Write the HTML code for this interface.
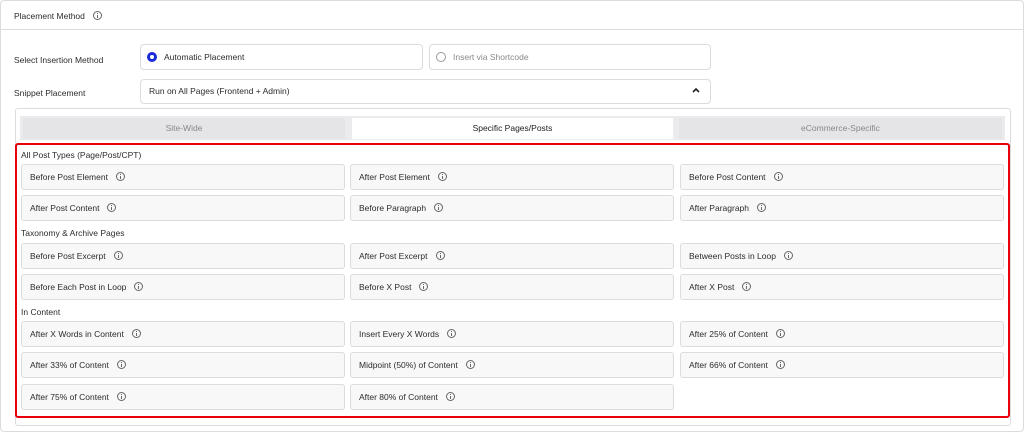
<!DOCTYPE html>
<html><head><meta charset="utf-8"><style>
*{box-sizing:border-box;margin:0;padding:0}
body{width:1024px;height:430px;background:#fff;font-family:"Liberation Sans",sans-serif;font-size:8.5px;color:#2c2c2c;position:relative;overflow:hidden}
.a{position:absolute}
.card{left:0;top:0;width:1024px;height:432px;border:1px solid #dcdcde;border-radius:4px}
.hdr{left:0;top:29px;width:1024px;height:1px;background:#dcdcde}
.box{border:1px solid #dcdcde;border-radius:4px;background:#fff}
.ic{display:inline-block;width:9px;height:9px;border:1px solid #666;border-radius:50%;vertical-align:middle;margin-left:8px;position:relative;top:-1px}
.ic:after{content:"";position:absolute;left:3px;top:3px;width:1px;height:3px;background:#666}
.ic:before{content:"";position:absolute;left:3px;top:1px;width:1px;height:1px;background:#666}
.btn{position:absolute;height:26px;border:1px solid #dcdcde;border-radius:3px;background:#f8f8f8;padding-left:8px;line-height:24px;width:324px}
.lbl{position:absolute;left:21px}
.tab{position:absolute;top:118px;height:21px;line-height:21px;text-align:center;color:#888}
</style></head><body>
<div class="a card"></div>
<div class="a hdr"></div>
<div class="a" style="left:14px;top:11px">Placement Method<span class="ic"></span></div>
<div class="a" style="left:14px;top:55px">Select Insertion Method</div>
<div class="a" style="left:14px;top:88px">Snippet Placement</div>
<div class="a box" style="left:140px;top:44px;width:283px;height:26px;padding-left:23px;line-height:24px">Automatic Placement</div>
<div class="a" style="left:147px;top:52px;width:10px;height:10px;border:3px solid #1a2ad8;border-radius:50%"></div>
<div class="a box" style="left:429px;top:44px;width:282px;height:26px;padding-left:23px;line-height:24px;color:#888">Insert via Shortcode</div>
<div class="a" style="left:436px;top:52px;width:10px;height:10px;border:1px solid #999;border-radius:50%"></div>
<div class="a box" style="left:140px;top:79px;width:571px;height:25px;padding-left:8px;line-height:23px">Run on All Pages (Frontend + Admin)</div>
<svg class="a" style="left:691px;top:86px" width="10" height="8"><path d="M2 6L5 3L8 6" stroke="#222" stroke-width="1.6" fill="none"/></svg>
<div class="a box" style="left:15px;top:108px;width:996px;height:318px;border-radius:3px"></div>
<div class="a" style="left:20px;top:116px;width:985px;height:24px;background:#ebebee"></div>
<div class="tab" style="left:23px;width:322px;background:#e5e5e8">Site-Wide</div>
<div class="tab" style="left:352px;width:321px;background:#fff;color:#222">Specific Pages/Posts</div>
<div class="tab" style="left:679px;width:323px;background:#e5e5e8">eCommerce-Specific</div>
<div class="a" style="left:15px;top:143px;width:995px;height:275px;border:2px solid #e8000b;border-radius:3px"></div>
<div class="lbl" style="top:150px">All Post Types (Page/Post/CPT)</div>
<div class="lbl" style="top:228px">Taxonomy &amp; Archive Pages</div>
<div class="lbl" style="top:307px">In Content</div>
<div class="btn" style="left:21px;top:164px">Before Post Element<span class="ic"></span></div>
<div class="btn" style="left:350px;top:164px">After Post Element<span class="ic"></span></div>
<div class="btn" style="left:680px;top:164px">Before Post Content<span class="ic"></span></div>
<div class="btn" style="left:21px;top:195px">After Post Content<span class="ic"></span></div>
<div class="btn" style="left:350px;top:195px">Before Paragraph<span class="ic"></span></div>
<div class="btn" style="left:680px;top:195px">After Paragraph<span class="ic"></span></div>
<div class="btn" style="left:21px;top:243px">Before Post Excerpt<span class="ic"></span></div>
<div class="btn" style="left:350px;top:243px">After Post Excerpt<span class="ic"></span></div>
<div class="btn" style="left:680px;top:243px">Between Posts in Loop<span class="ic"></span></div>
<div class="btn" style="left:21px;top:274px">Before Each Post in Loop<span class="ic"></span></div>
<div class="btn" style="left:350px;top:274px">Before X Post<span class="ic"></span></div>
<div class="btn" style="left:680px;top:274px">After X Post<span class="ic"></span></div>
<div class="btn" style="left:21px;top:321px">After X Words in Content<span class="ic"></span></div>
<div class="btn" style="left:350px;top:321px">Insert Every X Words<span class="ic"></span></div>
<div class="btn" style="left:680px;top:321px">After 25% of Content<span class="ic"></span></div>
<div class="btn" style="left:21px;top:352px">After 33% of Content<span class="ic"></span></div>
<div class="btn" style="left:350px;top:352px">Midpoint (50%) of Content<span class="ic"></span></div>
<div class="btn" style="left:680px;top:352px">After 66% of Content<span class="ic"></span></div>
<div class="btn" style="left:21px;top:384px">After 75% of Content<span class="ic"></span></div>
<div class="btn" style="left:350px;top:384px">After 80% of Content<span class="ic"></span></div>
</body></html>
